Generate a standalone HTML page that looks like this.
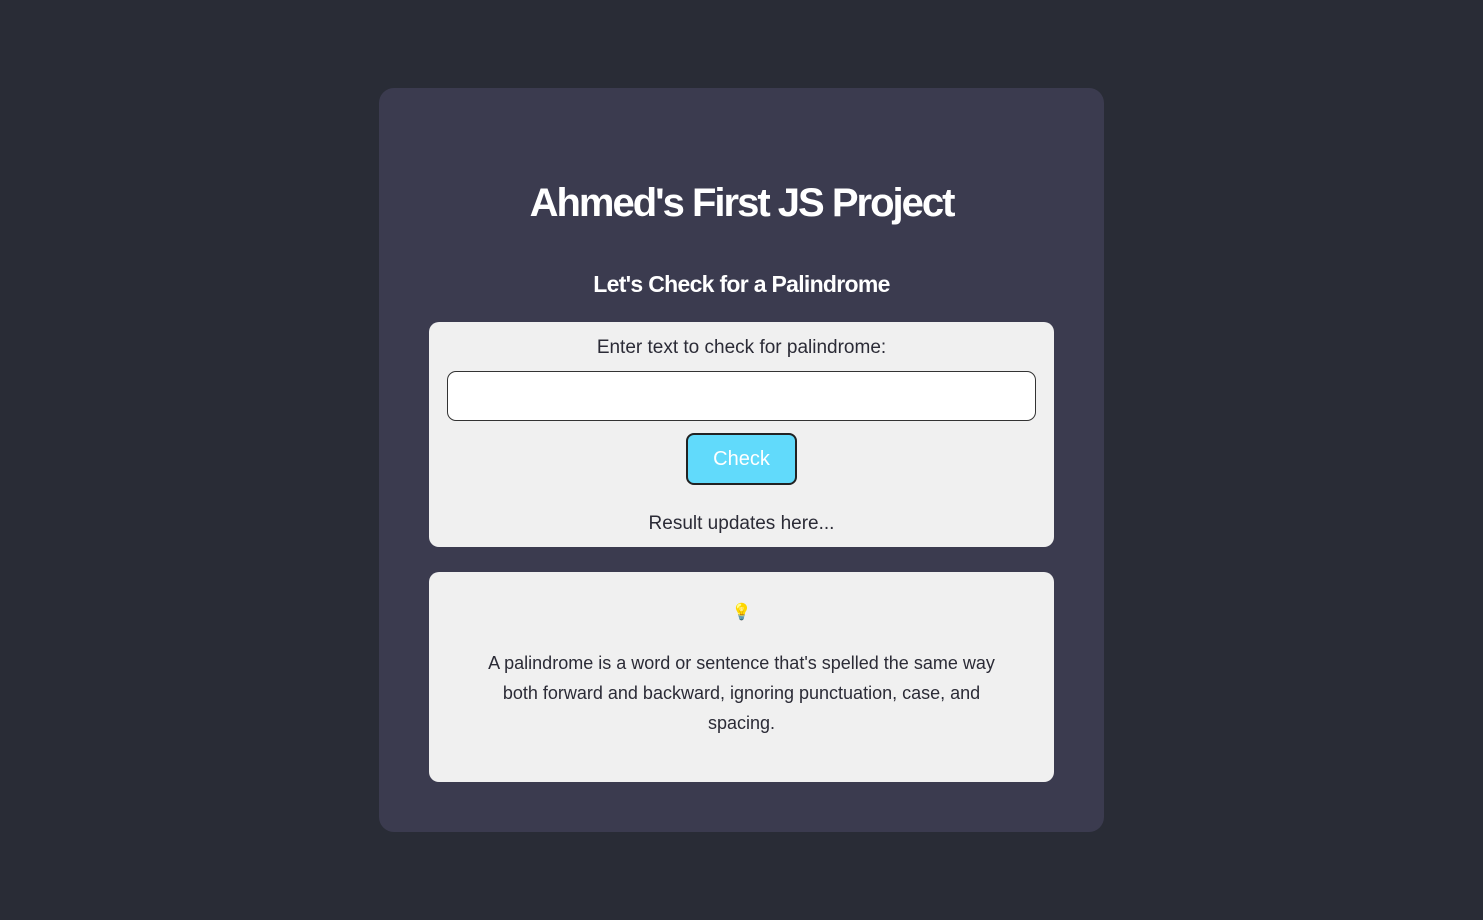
<!DOCTYPE html>
<html><head><meta charset="utf-8"><style>
html,body{margin:0;height:920px;background:#292c36;font-family:"Liberation Sans",sans-serif;}
.main{position:absolute;left:379px;top:88px;width:725px;height:744px;background:#3b3b4f;border-radius:15px;}
h1{position:absolute;left:0;right:0;top:180px;margin:0;text-align:center;color:#fff;font-size:40px;font-weight:bold;letter-spacing:-2px;line-height:46px;}
h2{position:absolute;left:0;right:0;top:270px;margin:0;text-align:center;color:#fff;font-size:23px;font-weight:bold;letter-spacing:-0.7px;line-height:28px;}
.box{position:absolute;left:429px;width:625px;background:#f0f0f0;border-radius:10px;color:#2b2b36;text-align:center;}
.b1{top:322px;height:225px;}
.b2{top:572px;height:210px;}
.lbl{position:absolute;left:0;right:0;top:15px;font-size:19px;}
.inp{position:absolute;left:18px;top:49px;width:587px;height:48px;background:#fff;border:1px solid #333;border-radius:9px;}
.btn{position:absolute;left:257px;top:111px;width:107px;height:48px;background:#61dafb;border:2px solid #222;border-radius:8px;color:#fff;font-size:20px;line-height:48px;}
.res{position:absolute;left:0;right:0;top:191px;font-size:19px;}
.bulb{position:absolute;left:0;right:0;top:30px;font-size:16px;}
.txt{position:absolute;left:42px;right:42px;top:76px;font-size:18px;line-height:30px;}
</style></head><body>
<div class="main"></div>
<h1>Ahmed's First JS Project</h1>
<h2>Let's Check for a Palindrome</h2>
<div class="box b1">
<div class="lbl">Enter text to check for palindrome:</div>
<div class="inp"></div>
<div class="btn">Check</div>
<div class="res">Result updates here...</div>
</div>
<div class="box b2">
<div class="bulb">💡</div>
<div class="txt">A palindrome is a word or sentence that's spelled the same way<br>both forward and backward, ignoring punctuation, case, and<br>spacing.</div>
</div>
</body></html>
